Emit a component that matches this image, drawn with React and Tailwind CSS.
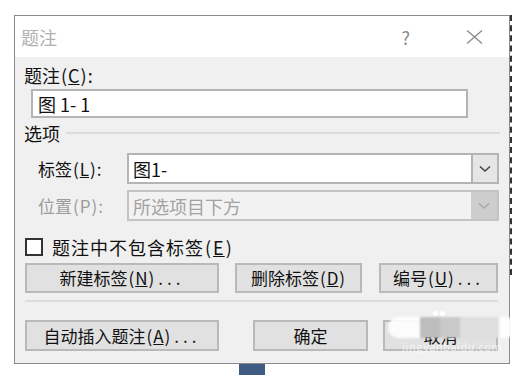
import React from "react";

const font = { fontFamily: "'Noto Sans CJK SC', 'Noto Sans', sans-serif" };

function Btn({ w, ml = "", children }) {
  return (
    <div
      className={`${w} ${ml} h-full flex items-center justify-center bg-[#e1e1e1] border-2 border-[#b9b9b9] text-[17px] text-[#111]`}
    >
      {children}
    </div>
  );
}

function Chevron({ color }) {
  return (
    <svg width="12" height="8" viewBox="0 0 12 8">
      <path d="M1 1.5 L6 6 L11 1.5" fill="none" stroke={color} strokeWidth="1.6" />
    </svg>
  );
}

// access key like (C) with the letter underlined, spaced a bit like the original
function Key({ k }) {
  return (
    <span className="px-[1px]">
      (<u className="px-[1px]">{k}</u>)
    </span>
  );
}

export default function App() {
  return (
    <div className="relative w-[527px] h-[375px] bg-white overflow-hidden" style={font}>
      <div className="flex items-start pt-[15px] pl-[14px]">
        {/* dialog */}
        <div className="w-[496px] h-[349px] flex flex-col border border-[#8a8a8a] bg-[#f0f0f0]">
          {/* title bar */}
          <div className="h-[41px] bg-white flex items-center pl-[6px] pr-[26px] shrink-0">
            <span className="text-[18px] text-[#b0b0b0] leading-none">题注</span>
            <span className="ml-auto text-[18px] text-[#8a8a8a] leading-none">?</span>
            <svg className="ml-[56px]" width="17" height="14" viewBox="0 0 17 14">
              <path d="M1 0.5 L16 13.5 M16 0.5 L1 13.5" stroke="#8a8a8a" strokeWidth="1.3" fill="none" />
            </svg>
          </div>

          {/* body */}
          <div className="flex flex-col text-[#111]">
            <div className="mt-[6px] pl-[9px] h-[24px] flex items-center text-[18px] leading-none">
              题注<Key k="C" />:
            </div>
            <div className="mt-[2px] ml-[16px] w-[437px] h-[29px] bg-white border-2 border-[#b4b4b4] flex items-center pl-[5px] text-[18px] leading-none">
              图 1- 1
            </div>

            <div className="mt-[4px] h-[22px] flex items-center pl-[9px] pr-[9px]">
              <span className="text-[18px] leading-none">选项</span>
              <div className="flex-1 h-[2px] bg-[#dcdcdc] ml-[6px]"></div>
            </div>

            {/* label combo */}
            <div className="mt-[9px] h-[31px] flex items-center">
              <span className="w-[112px] pl-[23px] text-[17px] leading-none">
                标签<Key k="L" />:
              </span>
              <div className="w-[372px] h-full bg-white border-2 border-[#b4b4b4] flex items-center">
                <span className="pl-[4px] text-[18px] leading-none">图1-</span>
                <div className="ml-auto w-[26px] h-full bg-[#e6e6e6] border-l-2 border-[#b4b4b4] flex items-center justify-center">
                  <Chevron color="#444" />
                </div>
              </div>
            </div>

            {/* position combo (disabled) */}
            <div className="mt-[6px] h-[31px] flex items-center">
              <span className="w-[112px] pl-[23px] text-[17px] leading-none text-[#9c9c9c]">
                位置<span className="px-[1px]">(<span className="px-[1px]">P</span>)</span>:
              </span>
              <div className="w-[372px] h-full bg-[#f2f2f2] border-2 border-[#c4c4c4] flex items-center">
                <span className="pl-[4px] text-[18px] leading-none text-[#a2a2a2]">所选项目下方</span>
                <div className="ml-auto w-[26px] h-full bg-[#cdcdcd] flex items-center justify-center">
                  <Chevron color="#a9a9a9" />
                </div>
              </div>
            </div>

            {/* checkbox */}
            <div className="mt-[17px] h-[18px] flex items-center pl-[10px]">
              <div className="w-[18px] h-[18px] bg-white border-2 border-[#333]"></div>
              <span className="ml-[9px] text-[18px] leading-none tracking-[1px]">
                题注中不包含标签<Key k="E" />
              </span>
            </div>

            {/* button row 1 */}
            <div className="mt-[7px] h-[30px] flex pl-[10px]">
              <Btn w="w-[194px]">
                新建标签<Key k="N" /><span className="tracking-[4px] ml-[3px]">...</span>
              </Btn>
              <Btn w="w-[127px]" ml="ml-[16px]">
                删除标签<Key k="D" />
              </Btn>
              <Btn w="w-[119px]" ml="ml-[17px]">
                编号<Key k="U" /><span className="tracking-[4px] ml-[3px]">...</span>
              </Btn>
            </div>

            <div className="mt-[7px] ml-[10px] w-[473px] h-[2px] bg-[#dcdcdc]"></div>

            {/* button row 2 */}
            <div className="mt-[18px] h-[31px] flex pl-[10px]">
              <Btn w="w-[194px]">
                自动插入题注<Key k="A" /><span className="tracking-[4px] ml-[3px]">...</span>
              </Btn>
              <Btn w="w-[115px]" ml="ml-[34px]">
                确定
              </Btn>
              <Btn w="w-[115px]" ml="ml-[15px]">
                取消
              </Btn>
            </div>
          </div>
        </div>
        {/* dark screen edge to the right */}
        <div className="w-[2px] h-[260px] border-l-2 border-dashed border-[#333]"></div>
      </div>
      <div className="ml-[239px] w-[26px] h-[12px] bg-[#3f5b82]"></div>

      {/* watermark over the cancel button */}
      <div className="absolute left-[388px] top-[317px] w-[128px] h-[21px] rounded-full bg-white/90 blur-[1px] flex items-stretch pl-[32px] pr-[17px]">
        <div className="w-[20px] bg-[#bdbdbd]"></div>
        <div className="w-[20px] bg-[#c9c9c9]"></div>
        <div className="flex-1 bg-[#dedede]"></div>
      </div>
      <div className="absolute left-[433px] top-[311px] flex gap-[2px]">
        <div className="w-[5px] h-[5px] rounded-full bg-white"></div>
        <div className="w-[5px] h-[5px] rounded-full bg-white"></div>
      </div>
      <div className="absolute left-[402px] top-[341px] text-[11px] leading-none text-white/70 tracking-[0.5px]">
        jingyanbaidu.com
      </div>
    </div>
  );
}
